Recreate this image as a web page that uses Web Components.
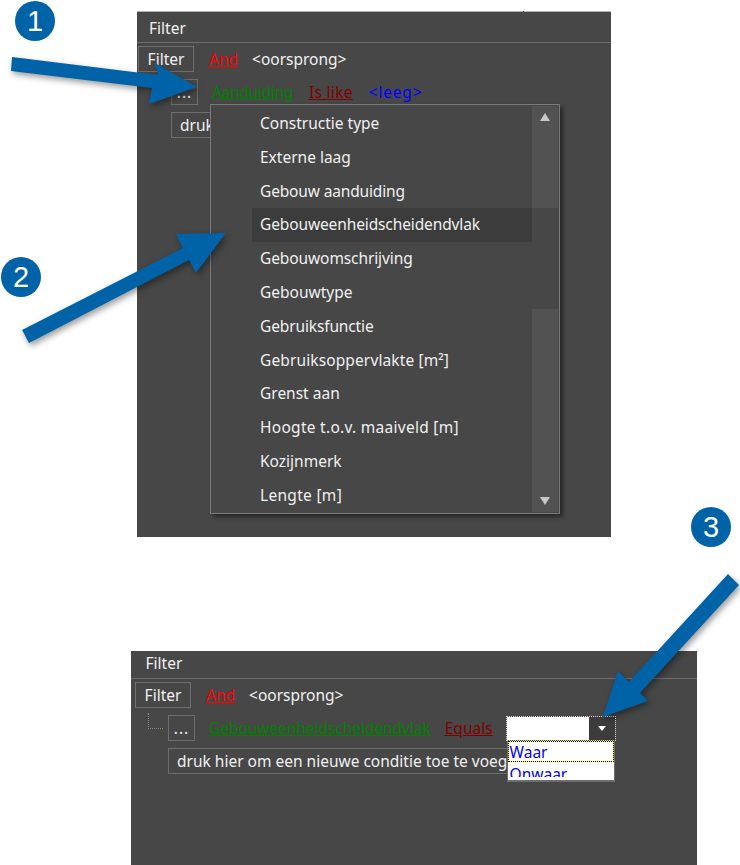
<!DOCTYPE html>
<html>
<head>
<meta charset="utf-8">
<title>Filter</title>
<style>
  html, body { margin: 0; padding: 0; background: #fff; }
  body { width: 740px; height: 865px; overflow: hidden; position: relative; font-family: "Noto Sans", sans-serif; }
  .first { margin: 11px 0 0 137px; border-top: 1px solid #b4b4b4; }
  .second { margin: 114px 0 0 131px; }
  .tick { position: absolute; left: 523px; top: 11px; width: 1px; height: 1px; background: #000; }
  .dots { width: 27px; padding: 0; text-align: center; letter-spacing: 1px; }
  .name { width: 56px; padding: 0; text-align: center; }
</style>
</head>
<body>
<filter-panel class="first" style="--w:474px;--h:526px;--pad:1px;--title:31px;--title-top:5px;--title-left:12px">
  <filter-row indent="0">
    <filter-button class="name">Filter</filter-button>
    <filter-token color="#ff0000" link style="margin-left:1px">And</filter-token>
    <filter-token color="#f0f0f0">&lt;oorsprong&gt;</filter-token>
  </filter-row>
  <filter-row indent="33">
    <filter-button class="dots">...</filter-button>
    <filter-token color="#008000" link style="letter-spacing:-.3px;margin-right:2px">Aanduiding</filter-token>
    <filter-token color="#800000" link style="letter-spacing:.3px">Is like</filter-token>
    <filter-token color="#0000ff" style="letter-spacing:.8px;margin-left:2px">&lt;leeg&gt;</filter-token>
  </filter-row>
  <filter-row indent="33">
    <filter-button style="width:60px">druk</filter-button>
  </filter-row>
  <field-menu style="left:73px;top:92px">
    <menu-item>Constructie type</menu-item>
    <menu-item>Externe laag</menu-item>
    <menu-item style="letter-spacing:-.15px">Gebouw aanduiding</menu-item>
    <menu-item hot style="letter-spacing:-.12px">Gebouweenheidscheidendvlak</menu-item>
    <menu-item style="letter-spacing:-.1px">Gebouwomschrijving</menu-item>
    <menu-item>Gebouwtype</menu-item>
    <menu-item style="letter-spacing:-.13px">Gebruiksfunctie</menu-item>
    <menu-item style="letter-spacing:.12px">Gebruiksoppervlakte [m²]</menu-item>
    <menu-item>Grenst aan</menu-item>
    <menu-item style="letter-spacing:.28px">Hoogte t.o.v. maaiveld [m]</menu-item>
    <menu-item>Kozijnmerk</menu-item>
    <menu-item style="letter-spacing:.3px">Lengte [m]</menu-item>
  </field-menu>
</filter-panel>

<filter-panel class="second" style="--w:566px;--h:214px;--pad:4px;--title:28px;--title-top:1px;--title-left:14.5px">
  <filter-row indent="0">
    <filter-button class="name">Filter</filter-button>
    <filter-token color="#ff0000" link style="margin-left:1px">And</filter-token>
    <filter-token color="#f0f0f0">&lt;oorsprong&gt;</filter-token>
  </filter-row>
  <filter-row indent="33" tree>
    <filter-button class="dots">...</filter-button>
    <filter-token color="#008000" link style="letter-spacing:-.05px">Gebouweenheidscheidendvlak</filter-token>
    <filter-token color="#800000" link>Equals</filter-token>
    <bool-combo></bool-combo>
  </filter-row>
  <filter-row indent="33">
    <filter-button style="width:340px;overflow:hidden">druk hier om een nieuwe conditie toe te voeg</filter-button>
  </filter-row>
</filter-panel>

<span class="tick"></span>
<step-badge style="left:15px;top:1px">1</step-badge>
<step-badge style="left:1px;top:257px">2</step-badge>
<step-badge style="left:691px;top:507px">3</step-badge>
<call-arrow points="12,57 158,75 155,63 197,87 149,104 152,88 11,71"></call-arrow>
<call-arrow points="22,330 183,248 176,234 226,233 196,273 189,260 29,343"></call-arrow>
<call-arrow points="728,574 739,585 640,693 648,701 603,717 618,671 629,682"></call-arrow>

<script>
class FilterPanel extends HTMLElement {
  constructor() {
    super();
    this.shadowDOM = this.attachShadow({mode: 'open'});
    this.shadowDOM.innerHTML = `
      <style>
        :host {
          display: block;
          position: relative;
          box-sizing: border-box;
          width: var(--w);
          height: var(--h);
          background: #474747;
          color: #f0f0f0;
          font: 15.5px "Noto Sans", sans-serif;
        }
        .title {
          height: var(--title);
          box-sizing: border-box;
          padding: var(--title-top) 0 0 var(--title-left);
          line-height: 22px;
          border-bottom: 1px solid #6e6e6e;
        }
        .body {
          display: flex;
          flex-direction: column;
          gap: 7px;
          padding: 3px 0 0 var(--pad);
        }
      </style>
      <div class="title">Filter</div>
      <div class="body"><slot></slot></div>
    `;
  }
}

class FilterRow extends HTMLElement {
  constructor() {
    super();
    this.shadowDOM = this.attachShadow({mode: 'open'});
  }

  connectedCallback() {
    const indent = this.getAttribute('indent') || 0;
    this.shadowDOM.innerHTML = `
      <style>
        :host {
          display: flex;
          align-items: center;
          position: relative;
          height: 26px;
          gap: 14px;
          padding-left: ${indent}px;
          white-space: nowrap;
        }
        .tree {
          position: absolute;
          left: 13px;
          top: -2px;
          width: 14px;
          height: 15px;
          border-left: 1px dotted #8a8a8a;
          border-bottom: 1px dotted #8a8a8a;
        }
      </style>
      ${this.hasAttribute('tree') ? '<span class="tree"></span>' : ''}
      <slot></slot>
    `;
  }
}

class FilterButton extends HTMLElement {
  constructor() {
    super();
    this.shadowDOM = this.attachShadow({mode: 'open'});
    this.shadowDOM.innerHTML = `
      <style>
        :host {
          display: block;
          box-sizing: border-box;
          height: 26px;
          line-height: 24px;
          padding: 0 8px;
          border: 1px solid #6e6e6e;
          background: #474747;
        }
      </style>
      <slot></slot>
    `;
  }
}

class FilterToken extends HTMLElement {
  constructor() {
    super();
    this.shadowDOM = this.attachShadow({mode: 'open'});
  }

  connectedCallback() {
    this.shadowDOM.innerHTML = `
      <style>
        :host {
          display: block;
          color: ${this.getAttribute('color')};
          text-decoration: ${this.hasAttribute('link') ? 'underline' : 'none'};
        }
      </style>
      <slot></slot>
    `;
  }
}

class BoolCombo extends HTMLElement {
  constructor() {
    super();
    this.shadowDOM = this.attachShadow({mode: 'open'});
    this.shadowDOM.innerHTML = `
      <style>
        :host {
          display: flex;
          position: relative;
          z-index: 2;
          box-sizing: border-box;
          width: 110px;
          height: 25px;
          margin-left: -1px;
          border: 1px dotted #d8d8d8;
        }
        .value { width: 82px; background: #fff; }
        .drop { flex: 1; display: flex; align-items: center; justify-content: center; background: #3c3c3c; }
        .list {
          position: absolute;
          left: 0;
          top: 24px;
          box-sizing: border-box;
          width: 108px;
          height: 41px;
          padding-bottom: 3px;
          background: #fff;
          border: 1px solid #6e6e6e;
          border-top: 0;
          border-bottom-width: 2px;
          color: #0000ff;
          font-size: 15.5px;
        }
        .clip { height: 100%; overflow: hidden; }
        .opt { height: 21px; line-height: 22px; padding-left: 2px; box-sizing: border-box; }
        .sel {
          border: 1px dotted #000;
          line-height: 20px;
          padding-left: 1px;
          background: linear-gradient(#fff, #fff) padding-box, #ffff00 border-box;
        }
        .next { line-height: 25px; }
      </style>
      <div class="value"></div>
      <div class="drop"><svg width="8" height="5" viewBox="0 0 8 5"><path d="M0 0H8L4 5Z" fill="#fff"/></svg></div>
      <div class="list"><div class="clip"><div class="opt sel">Waar</div><div class="opt next">Onwaar</div></div></div>
    `;
  }
}

class FieldMenu extends HTMLElement {
  constructor() {
    super();
    this.shadowDOM = this.attachShadow({mode: 'open'});
    this.shadowDOM.innerHTML = `
      <style>
        :host {
          display: flex;
          position: absolute;
          z-index: 3;
          box-sizing: border-box;
          width: 350px;
          height: 410px;
          padding: 1px;
          background: #474747;
          border: 1px solid #7a7a7a;
          box-shadow: 3px 3px 4px rgba(0, 0, 0, .45);
        }
        .items { flex: 1; padding: 1px 0 0 40px; }
        .bar {
          display: flex;
          flex-direction: column;
          justify-content: space-between;
          align-items: center;
          width: 26px;
          background: linear-gradient(#525252 0 102px, #474747 102px 203px, #525252 203px);
          padding: 7px 0;
          box-sizing: border-box;
        }
      </style>
      <div class="items"><slot></slot></div>
      <div class="bar">
        <svg width="10" height="8" viewBox="0 0 10 8"><path d="M0 8L5 0L10 8Z" fill="#c8c8c8"/></svg>
        <svg width="10" height="8" viewBox="0 0 10 8"><path d="M0 0L5 8L10 0Z" fill="#c8c8c8"/></svg>
      </div>
    `;
  }
}

class MenuItem extends HTMLElement {
  constructor() {
    super();
    this.shadowDOM = this.attachShadow({mode: 'open'});
  }

  connectedCallback() {
    this.shadowDOM.innerHTML = `
      <style>
        :host {
          display: block;
          height: 33.8px;
          line-height: 33.8px;
          padding-left: 8px;
          white-space: nowrap;
          background: ${this.hasAttribute('hot') ? '#3c3c3c' : 'transparent'};
        }
      </style>
      <slot></slot>
    `;
  }
}

class StepBadge extends HTMLElement {
  constructor() {
    super();
    this.shadowDOM = this.attachShadow({mode: 'open'});
    this.shadowDOM.innerHTML = `
      <style>
        :host {
          display: flex;
          align-items: center;
          justify-content: center;
          position: absolute;
          z-index: 5;
          width: 40px;
          height: 40px;
          border-radius: 50%;
          background: #0063a8;
          color: #fff;
          font: 29px "Liberation Sans", sans-serif;
        }
      </style>
      <slot></slot>
    `;
  }
}

class CallArrow extends HTMLElement {
  constructor() {
    super();
    this.shadowDOM = this.attachShadow({mode: 'open'});
  }

  connectedCallback() {
    this.shadowDOM.innerHTML = `
      <style>
        :host {
          position: absolute;
          left: 0;
          top: 0;
          z-index: 4;
          pointer-events: none;
        }
        svg { display: block; filter: drop-shadow(2px 3px 3px rgba(0, 0, 0, .4)); }
      </style>
      <svg width="740" height="865"><polygon points="${this.getAttribute('points')}" fill="#0063a8"/></svg>
    `;
  }
}

customElements.define('filter-panel', FilterPanel);
customElements.define('filter-row', FilterRow);
customElements.define('filter-button', FilterButton);
customElements.define('filter-token', FilterToken);
customElements.define('bool-combo', BoolCombo);
customElements.define('field-menu', FieldMenu);
customElements.define('menu-item', MenuItem);
customElements.define('step-badge', StepBadge);
customElements.define('call-arrow', CallArrow);
</script>
</body>
</html>
